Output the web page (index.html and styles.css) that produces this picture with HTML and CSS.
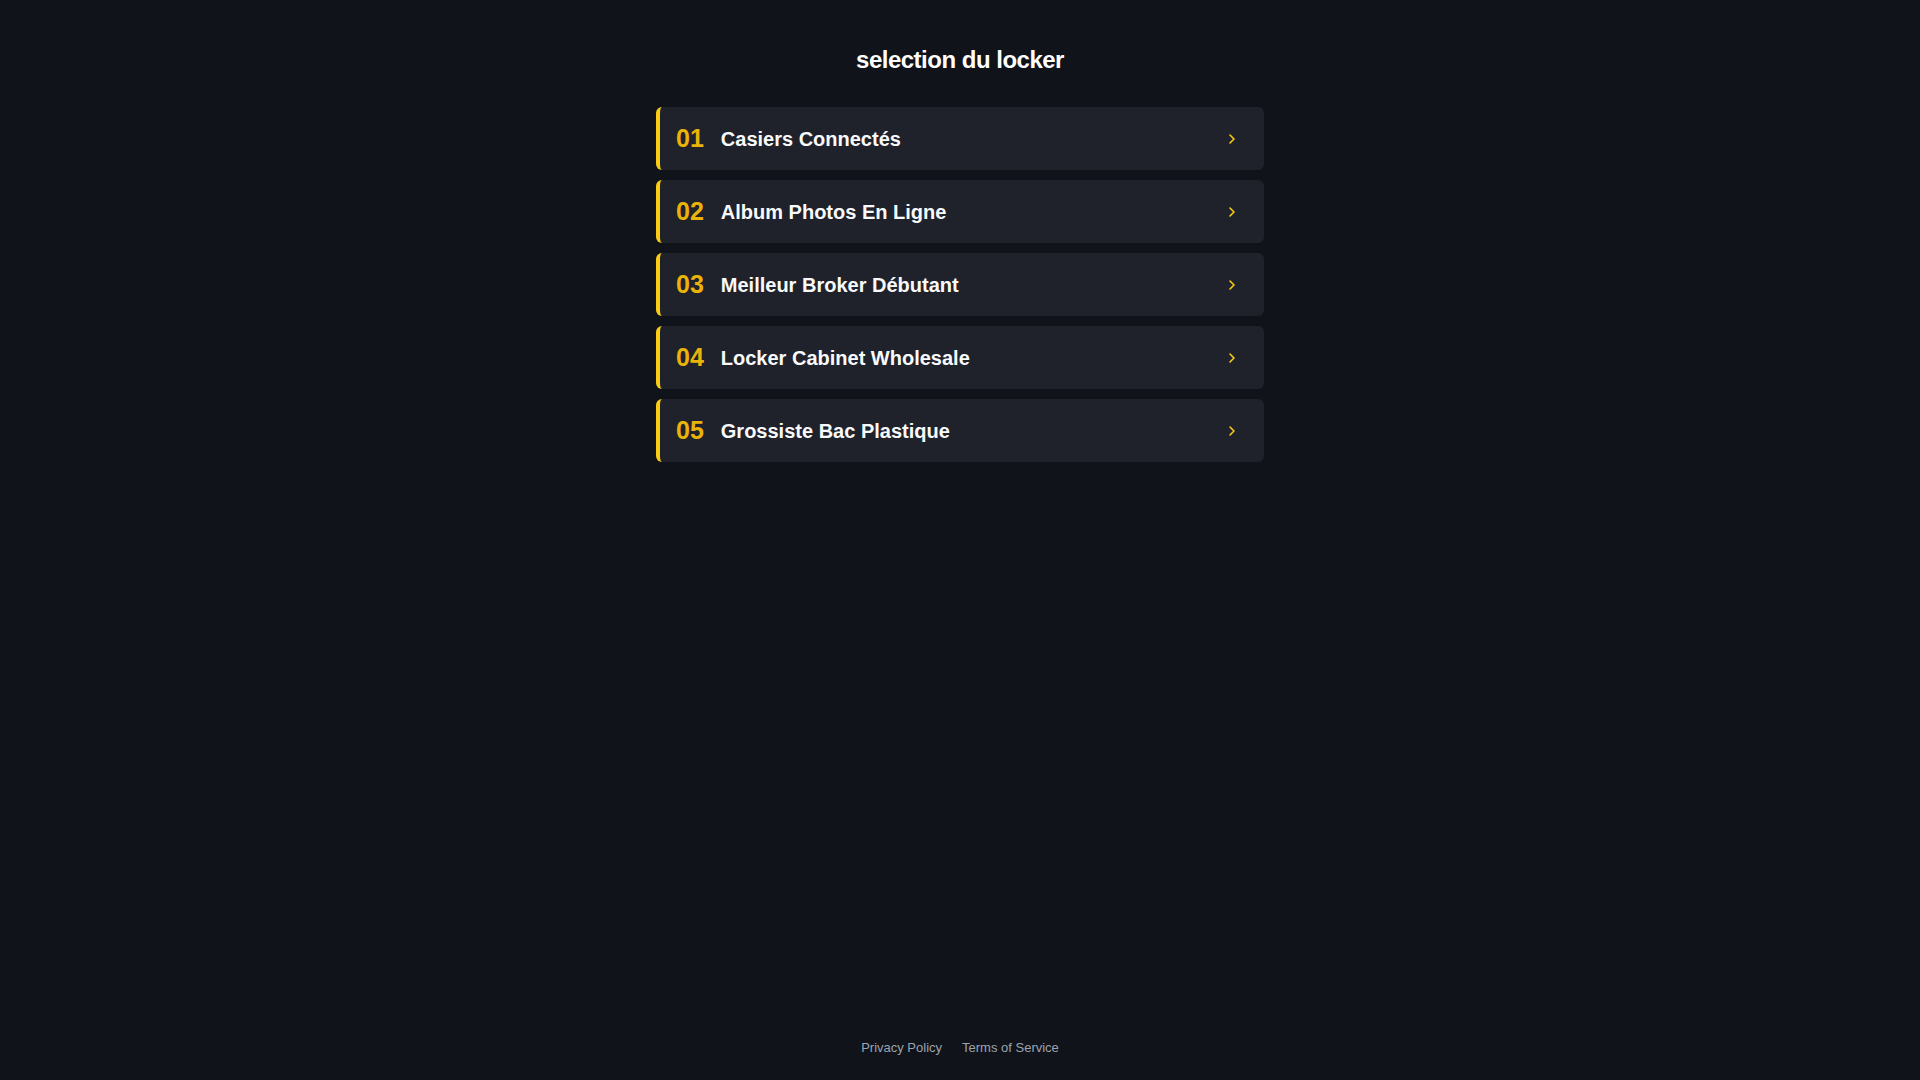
FILE: index.html
```html
<!DOCTYPE html>
<html lang="fr">
<head>
<meta charset="utf-8">
<title>selection du locker</title>
<link rel="stylesheet" href="styles.css">
</head>
<body>
<main class="main">
  <h1 class="title">selection du locker</h1>
  <ul class="list">
    <li class="item"><span class="num">01</span><span class="label">Casiers Connectés</span><svg class="chev" viewBox="0 0 24 24" width="16" height="16"><path d="m9 18 6-6-6-6"/></svg></li>
    <li class="item"><span class="num">02</span><span class="label">Album Photos En Ligne</span><svg class="chev" viewBox="0 0 24 24" width="16" height="16"><path d="m9 18 6-6-6-6"/></svg></li>
    <li class="item"><span class="num">03</span><span class="label">Meilleur Broker Débutant</span><svg class="chev" viewBox="0 0 24 24" width="16" height="16"><path d="m9 18 6-6-6-6"/></svg></li>
    <li class="item"><span class="num">04</span><span class="label">Locker Cabinet Wholesale</span><svg class="chev" viewBox="0 0 24 24" width="16" height="16"><path d="m9 18 6-6-6-6"/></svg></li>
    <li class="item"><span class="num">05</span><span class="label">Grossiste Bac Plastique</span><svg class="chev" viewBox="0 0 24 24" width="16" height="16"><path d="m9 18 6-6-6-6"/></svg></li>
  </ul>
</main>
<footer class="footer">
  <a class="flink" href="#">Privacy Policy</a>
  <a class="flink" href="#">Terms of Service</a>
</footer>
</body>
</html>
```

FILE: styles.css
```css
html, body {
  margin: 0;
  padding: 0;
}
body {
  background: #10131a;
  font-family: "Liberation Sans", Arial, sans-serif;
  color: #f3f4f6;
  min-height: 100vh;
  display: flex;
  flex-direction: column;
}
.main {
  flex: 1;
  width: 608px;
  margin: 0 auto;
  padding-top: 44px;
}
.title {
  margin: 0 0 31px;
  font-size: 24px;
  line-height: 32px;
  font-weight: 700;
  letter-spacing: -0.5px;
  text-align: center;
  color: #ffffff;
}
.list {
  list-style: none;
  margin: 0;
  padding: 0;
  display: flex;
  flex-direction: column;
  gap: 10px;
}
.item {
  display: flex;
  align-items: center;
  gap: 17px;
  height: 31px;
  padding: 16px 24px 16px 16px;
  background: #1f212b;
  border-left: 4px solid #facc15;
  border-radius: 6px;
  line-height: 31px;
}
.num {
  font-size: 25px;
  font-weight: 700;
  color: #eab308;
}
.label {
  font-size: 20px;
  font-weight: 700;
  color: #f9fafb;
  line-height: 29px;
  padding-top: 2px;
}
.chev {
  margin-left: auto;
  fill: none;
  stroke: #facc15;
  stroke-width: 2.4;
  stroke-linecap: round;
  stroke-linejoin: round;
}
.footer {
  display: flex;
  justify-content: center;
  gap: 20px;
  padding-bottom: 22px;
  font-size: 13px;
  line-height: 20px;
}
.flink {
  color: #9ca3af;
  text-decoration: none;
}
```
